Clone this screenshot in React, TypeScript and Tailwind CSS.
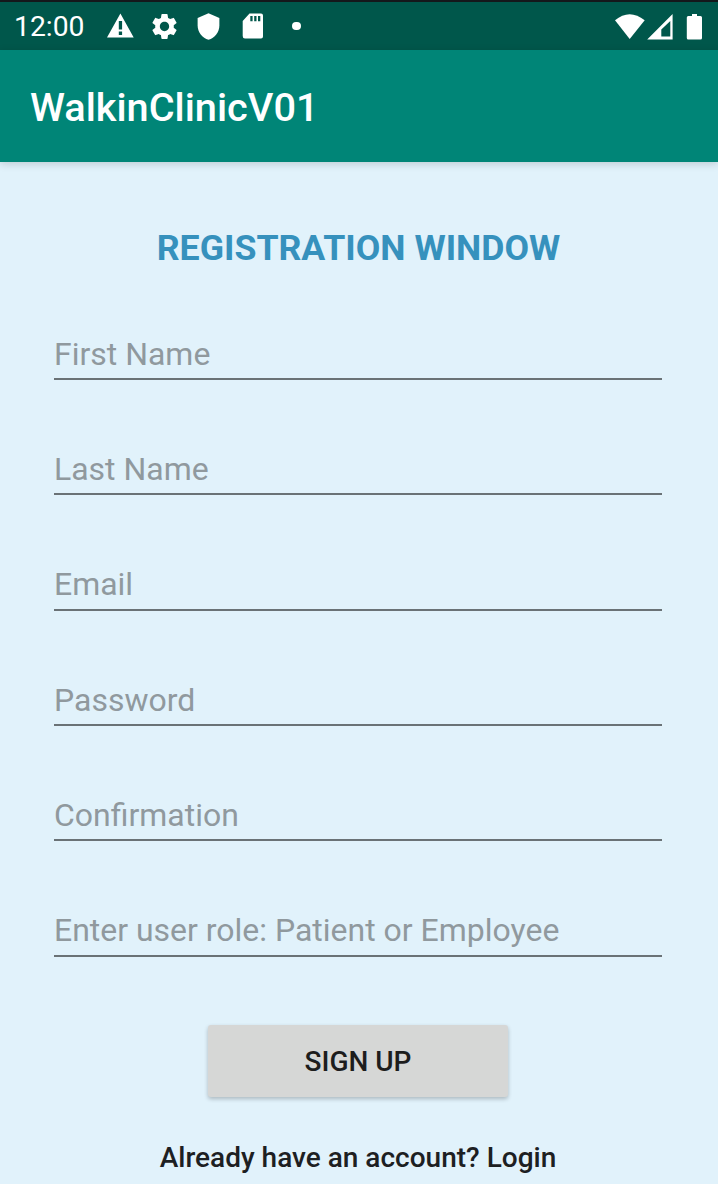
import { MdSettings, MdShield } from "react-icons/md";

const fields = [
  "First Name",
  "Last Name",
  "Email",
  "Password",
  "Confirmation",
  "Enter user role: Patient or Employee",
];

function StatusBar() {
  return (
    <div className="flex h-[50px] items-center border-t-2 border-[#14181b] bg-[#00574b] pl-[14px] text-white">
      <span className="w-[91px] pt-[3px] text-[28.3px] leading-none">12:00</span>
      <svg className="h-[30px] w-[30px]" viewBox="0 0 30 30" fill="currentColor">
        <path fillRule="evenodd" d="M15.4 2.5 28.700 26.500H2ZM13.800 10V18.500H17.100V10ZM13.800 20.500V24H17.100V20.500Z" />
      </svg>
      <MdSettings className="ml-[14px] size-[31px]" />
      <MdShield className="ml-[14px] size-[29px]" />
      <svg className="ml-[15px] h-[30px] w-[30px]" viewBox="0 0 30 30" fill="currentColor">
        <path
          fillRule="evenodd"
          d="M11.500 2.500H23Q25 2.500 25 4.500V25.500Q25 27.500 23 27.500H7Q4.700 27.500 4.700 25V10ZM12.300 5V10.200H14.600V5ZM16.200 5V10.200H18.500V5ZM20 5V10.200H22.300V5Z"
        />
      </svg>
      <span className="ml-6 size-[8.5px] rounded-full bg-white" />
      <svg className="mt-px ml-auto h-[28px] w-[104px]" viewBox="0 0 104 28" fill="currentColor">
        <path d="M1 7.3Q15.500-5 30.700 7.300L15.700 26Z" />
        <path d="M58.600 1V26.500H33.200ZM56.300 8 47.300 16.500V23.500H56.300Z" fillRule="evenodd" />
        <path d="M78 1H83V3H86.500Q88 3 88 4.500V25Q88 26.500 86.500 26.500H74.300Q72.800 26.500 72.800 25V4.500Q72.800 3 74.300 3H78Z" />
      </svg>
    </div>
  );
}

export default function App() {
  return (
    <div className="flex h-[1184px] w-[718px] flex-col overflow-hidden bg-[#e1f2fb] font-['Roboto',sans-serif]">
      <StatusBar />
      <header className="z-10 flex h-28 items-center bg-[#008577] pt-[4px] pl-[30px] text-[39.700px] font-medium text-white shadow-[0_2px_8px_rgba(0,0,0,0.16)]">
        WalkinClinicV01
      </header>
      <main className="flex flex-col items-center pt-[62px] pr-[2px]">
        <h1 className="pl-px text-[35.700px] leading-[48px] font-bold text-[#3691bd]">REGISTRATION WINDOW</h1>
        <form className="mt-[53px] flex w-[608px] flex-col">
          {fields.map((field) => (
            <input
              key={field}
              aria-label={field}
              placeholder={field}
              className="mb-[60.350px] h-[55px] border-b-2 border-[#6a7276] bg-transparent pt-[4px] text-[31.980px] outline-none placeholder:text-[#90999e]"
            />
          ))}
          <button type="button" className="mt-[7.700px] h-[72px] w-[300px] self-center rounded-[3px] bg-[#d6d7d6] pt-[2px] text-[28px] font-medium text-[#1d1d1d] shadow-[0_2px_4px_rgba(0,0,0,0.24)]">
            SIGN UP
          </button>
        </form>
        <p className="mt-[41px] text-[28px] leading-10 font-medium text-[#1d2022]">Already have an account? Login</p>
      </main>
    </div>
  );
}
